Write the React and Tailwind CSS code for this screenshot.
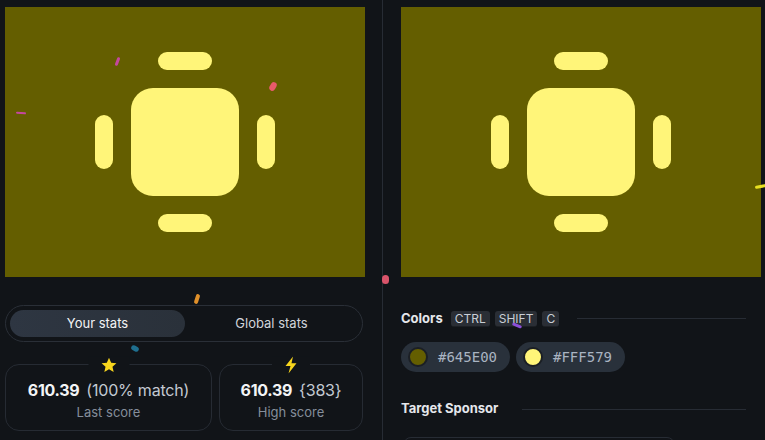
import React from "react";

const confetti = [
  { x: 116, y: 57, w: 3, h: 9, r: 20, c: "#c4479e" },
  { x: 270, y: 82, w: 6, h: 9, r: 30, c: "#e85a6a" },
  { x: 16, y: 112, w: 10, h: 2, r: 5, c: "#c4479e" },
  { x: 195, y: 294, w: 4, h: 10, r: 18, c: "#e0902a" },
  { x: 131, y: 346, w: 8, h: 5, r: 30, c: "#1f6f8f" },
  { x: 382, y: 275, w: 7, h: 9, r: 0, c: "#d9546a" },
  { x: 755, y: 185, w: 11, h: 3, r: -10, c: "#e8e020" },
  { x: 512, y: 324, w: 10, h: 3, r: 22, c: "#8b4fd8" },
];

const Drawing = () => (
  <div className="shrink-0 w-[360px] h-[270px] bg-[#645E00] flex flex-col items-center justify-center gap-[18px]">
    <div className="w-[54px] h-[18px] rounded-full bg-[#FFF579]" />
    <div className="flex items-center gap-[18px]">
      <div className="w-[18px] h-[54px] rounded-full bg-[#FFF579]" />
      <div className="w-[108px] h-[108px] rounded-[22px] bg-[#FFF579]" />
      <div className="w-[18px] h-[54px] rounded-full bg-[#FFF579]" />
    </div>
    <div className="w-[54px] h-[18px] rounded-full bg-[#FFF579]" />
  </div>
);

const Star = () => (
  <svg width="17" height="17" viewBox="0 0 24 24">
    <path
      d="M12 1.8l3.1 6.9 7.4.7-5.6 5 1.7 7.4L12 17.9l-6.6 3.9 1.7-7.4-5.6-5 7.4-.7z"
      fill="#f7d51d"
    />
  </svg>
);

const Bolt = () => (
  <svg width="14" height="17" viewBox="0 0 14 17">
    <path d="M9 0L1.5 9.5h5L4.5 17 12.5 6.8h-5L9 0z" fill="#f7d51d" />
  </svg>
);

const ScoreCard = ({ width, icon, value, extra, label }) => (
  <div className={`relative ${width} h-[67px] rounded-[14px] border border-[#262b33] flex flex-col items-center justify-center`}>
    <div className="absolute left-1/2 top-0 -translate-x-1/2 -translate-y-1/2 bg-[#111418] px-[12px] flex items-center">
      {icon}
    </div>
    <div className="flex items-baseline gap-[7px] mt-[2px]">
      <span className="text-[16px] font-bold text-[#f3f4f6] tracking-[-0.3px]">{value}</span>
      <span className="text-[16px] text-[#c3c9d2] tracking-[-0.2px]">{extra}</span>
    </div>
    <div className="text-[13px] text-[#858e9b] leading-4 mt-[2px]">{label}</div>
  </div>
);

const Kbd = ({ children }) => (
  <span className="h-[16px] px-[4px] rounded-[3px] bg-[#2a2e35] border-b border-[#1c1f24] text-[12px] leading-[16px] text-[#c9ced6]">
    {children}
  </span>
);

const ColorPill = ({ color, label }) => (
  <div className="h-[30px] w-[109px] rounded-full bg-[#29313b] flex items-center pl-[7px] gap-[10px]">
    <span className="w-[20px] h-[20px] rounded-full border-2 border-[#1b1f25]" style={{ backgroundColor: color }} />
    <span className="text-[14px] text-[#a9b4c2]" style={{ fontFamily: '"DejaVu Sans Mono", monospace' }}>
      {label}
    </span>
  </div>
);

export default function App() {
  return (
    <div
      className="relative w-[765px] h-[440px] overflow-hidden bg-[#111418] flex"
      style={{ fontFamily: 'Inter, "Noto Sans", sans-serif' }}
    >
      <div className="w-[383px] h-full border-r border-[#272c34] pl-[5px] pt-[7px] flex flex-col">
        <Drawing />
        <div className="shrink-0 mt-[28px] w-[358px] h-[37px] rounded-full border border-[#2a2f37] p-[4px] flex">
          <div className="w-[175px] h-full rounded-full bg-gradient-to-r from-[#2e3642] to-[#2a313a] flex items-center justify-center text-[13px] text-[#f3f4f6]">
            Your stats
          </div>
          <div className="flex-1 flex items-center justify-center text-[13px] text-[#d1d5db]">
            Global stats
          </div>
        </div>
        <div className="shrink-0 mt-[22px] flex gap-[7px]">
          <ScoreCard width="w-[207px]" icon={<Star />} value="610.39" extra="(100% match)" label="Last score" />
          <ScoreCard width="w-[144px]" icon={<Bolt />} value="610.39" extra="{383}" label="High score" />
        </div>
      </div>

      <div className="flex-1 h-full pl-[18px] pt-[7px] flex flex-col">
        <Drawing />
        <div className="shrink-0 mt-[33px] flex items-center h-[17px] pr-[19px]">
          <span className="text-[13px] font-bold text-[#e5e7eb] mr-[8px]">Colors</span>
          <div className="flex gap-[5px]">
            <Kbd>CTRL</Kbd>
            <Kbd>SHIFT</Kbd>
            <Kbd>C</Kbd>
          </div>
          <div className="flex-1 h-px bg-[#272c34] ml-[18px]" />
        </div>
        <div className="shrink-0 mt-[15px] flex gap-[6px]">
          <ColorPill color="#645E00" label="#645E00" />
          <ColorPill color="#FFF579" label="#FFF579" />
        </div>
        <div className="shrink-0 mt-[29px] flex items-center h-[16px] pr-[19px]">
          <span className="text-[13px] font-bold text-[#e5e7eb]">Target Sponsor</span>
          <div className="flex-1 h-px bg-[#272c34] ml-[24px]" />
        </div>
        <div className="shrink-0 mt-[20px] ml-[2px] w-[272px] h-[36px] rounded-[8px] border border-[#272c34]" />
      </div>

      {confetti.map((p, i) => (
        <span
          key={i}
          className="absolute rounded-full"
          style={{ left: p.x, top: p.y, width: p.w, height: p.h, backgroundColor: p.c, transform: `rotate(${p.r}deg)` }}
        />
      ))}
    </div>
  );
}
